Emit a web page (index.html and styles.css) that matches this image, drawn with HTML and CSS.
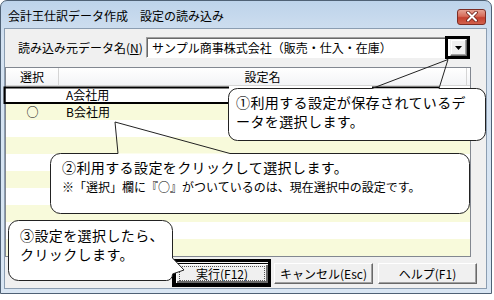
FILE: index.html
```html
<!DOCTYPE html>
<html lang="ja">

<head>
    <meta charset="UTF-8">
    <title>設定の読み込み</title>
    <link rel="stylesheet" href="styles.css">
</head>

<body>
    <div class="stage">
        <div class="window">
            <div class="titlebar">
                <span class="title">会計王仕訳データ作成　設定の読み込み</span>
                <span class="close">
                    <svg width="14" height="11" viewBox="0 0 14 11">
                        <path d="M3 1.5 L11 9.5 M11 1.5 L3 9.5" stroke="#6b1f18" stroke-width="3.6" stroke-linecap="round"/>
                        <path d="M3 1.5 L11 9.5 M11 1.5 L3 9.5" stroke="#fff" stroke-width="2" stroke-linecap="round"/>
                    </svg>
                </span>
            </div>
            <div class="client">
                <div class="source">
                    <span class="source-label">読み込み元データ名(<u>N</u>)</span>
                    <div class="combo">
                        <span class="combo-text">サンプル商事株式会社（販売・仕入・在庫）</span>
                        <span class="combo-btn">
                            <svg width="7" height="4" viewBox="0 0 7 4"><path d="M0 0 H7 L3.5 4 Z" fill="#000"/></svg>
                        </span>
                    </div>
                </div>
                <div class="list">
                    <div class="list-head">
                        <span class="col-sel">選択</span>
                        <span class="col-name">設定名</span>
                    </div>
                    <div class="row">
                        <span class="col-sel"></span>
                        <span class="col-name">A会社用</span>
                    </div>
                    <div class="row alt">
                        <span class="col-sel">○</span>
                        <span class="col-name">B会社用</span>
                    </div>
                    <div class="row"></div>
                    <div class="row alt"></div>
                    <div class="row"></div>
                    <div class="row alt"></div>
                    <div class="row"></div>
                    <div class="row alt"></div>
                    <div class="row"></div>
                    <div class="row alt"></div>
                </div>
                <div class="buttons">
                    <button class="btn btn-run"><span class="focus">実行(F12)</span></button>
                    <button class="btn btn-cancel">キャンセル(Esc)</button>
                    <button class="btn btn-help">ヘルプ(F1)</button>
                </div>
            </div>
        </div>

        <!-- annotations drawn over the dialog -->
        <svg class="marks" width="494" height="300" viewBox="0 0 494 300">
            <g fill="none" stroke="#000">
                <rect x="446.5" y="37.5" width="22" height="20" stroke-width="3"/>
                <path d="M229 87.5 H4.5 V103 H229" stroke-width="2"/>
                <path d="M372 87.5 H439" stroke-width="2"/>
                <rect x="173.5" y="260.5" width="96" height="25" stroke-width="3"/>
            </g>

            <rect x="228.5" y="88.5" width="257" height="52" rx="9" fill="#fff"/>
            <path d="M439 88.5 H476.5 A9 9 0 0 1 485.5 97.5 V131.5 A9 9 0 0 1 476.5 140.5 H237.5 A9 9 0 0 1 228.5 131.5 V97.5 A9 9 0 0 1 237.5 88.5 H372 L448 59.5 L439 88.5" fill="none" stroke="#222"/>

            <rect x="50.5" y="153.5" width="419" height="60" rx="10" fill="#fff"/>
            <path d="M230 153.5 H459.5 A10 10 0 0 1 469.5 163.5 V203.5 A10 10 0 0 1 459.5 213.5 H60.5 A10 10 0 0 1 50.5 203.5 V163.5 A10 10 0 0 1 60.5 153.5 H118 L115 122 L230 153.5" fill="none" stroke="#222"/>

            <path d="M18.5 220.5 H162.5 A10 10 0 0 1 172.5 230.5 V258 L184 270 L172.5 274 V274.5 A6 6 0 0 1 166.5 280.5 H18.5 A10 10 0 0 1 8.5 270.5 V230.5 A10 10 0 0 1 18.5 220.5 Z" fill="#fff" stroke="#222"/>
        </svg>

        <div class="note note-1">①利用する設定が保存されているデ<br>ータを選択します。</div>
        <div class="note note-2">②利用する設定をクリックして選択します。<br><small>※「選択」欄に『○』がついているのは、現在選択中の設定です。</small></div>
        <div class="note note-3">③設定を選択したら、<br>クリックします。</div>
    </div>
</body>

</html>
```

FILE: styles.css
```css
html,
body {
    margin: 0;
    padding: 0;
    background: #fff;
}

body {
    font-family: "Noto Sans CJK JP", "Liberation Sans", sans-serif;
    font-size: 12px;
    color: #000;
}

.stage {
    position: relative;
    width: 494px;
    height: 300px;
    overflow: hidden;
}

.window {
    width: 492px;
    height: 294px;
    box-sizing: border-box;
    border: 1px solid #4f6175;
    border-radius: 7px 7px 0 0;
    padding: 0 4px 4px 3px;
    background: linear-gradient(#bdd3ea, #d4e2f1 40px, #d9e6f3);
    display: flex;
    flex-direction: column;
}

.titlebar {
    height: 27px;
    display: flex;
    align-items: center;
    justify-content: space-between;
    padding: 0 0 0 4px;
}

.title {
    line-height: 14px;
    margin-top: 3px;
}

.close {
    width: 29px;
    height: 16px;
    margin: 4px 1px 0 0;
    box-sizing: border-box;
    border: 1px solid #7c2d24;
    border-radius: 3px;
    background: linear-gradient(#e6a293, #d66b59 45%, #c4402f 55%, #d2614c);
    display: flex;
    align-items: center;
    justify-content: center;
}

.client {
    flex: 1;
    box-sizing: border-box;
    border: 1px solid #8b9db1;
    background: #f0f0f0;
    display: flex;
    flex-direction: column;
}

.source {
    display: flex;
    align-items: center;
    margin-top: 8px;
    height: 21px;
}

.source-label {
    width: 128px;
    flex: none;
    margin-left: 13px;
    line-height: 14px;
}

.combo {
    width: 324px;
    height: 21px;
    box-sizing: border-box;
    border: 1px solid;
    border-color: #a0a0a0 #fff #fff #a0a0a0;
    box-shadow: inset 1px 1px #696969;
    background: #fff;
    display: flex;
    align-items: center;
    justify-content: space-between;
    padding: 1px 2px 1px 5px;
}

.combo-text {
    line-height: 14px;
}

.combo-btn {
    width: 17px;
    height: 17px;
    box-sizing: border-box;
    border: 1px solid;
    border-color: #f0f0f0 #696969 #696969 #f0f0f0;
    box-shadow: inset -1px -1px #a0a0a0, inset 1px 1px #fff;
    background: #f0f0f0;
    display: flex;
    align-items: center;
    justify-content: center;
}

.list {
    margin-top: 9px;
    width: 466px;
    height: 190px;
    box-sizing: border-box;
    border: 1px solid #828790;
    background: #fff;
}

.list-head {
    height: 18px;
    box-sizing: border-box;
    border-bottom: 1px solid #d5d5d5;
    background: linear-gradient(#fff, #f3f4f6);
    display: flex;
    padding-right: 3px;
}

.list-head span {
    border-right: 1px solid #d5d5d5;
    line-height: 17px;
}

.list-head .col-name {
    text-align: center;
    padding-left: 0;
}

.col-sel {
    width: 53px;
    flex: none;
    text-align: center;
    box-sizing: border-box;
}

.col-name {
    flex: 1;
    padding-left: 7px;
}

.row {
    height: 17px;
    display: flex;
    line-height: 17px;
}

.row.alt {
    background: #f8fadb;
}

.buttons {
    display: flex;
    justify-content: flex-end;
    gap: 5px;
    margin-top: 6px;
    padding-right: 9px;
}

.btn {
    height: 21px;
    box-sizing: border-box;
    padding: 0;
    border: 1px solid;
    border-color: #fff #696969 #696969 #fff;
    box-shadow: inset -1px -1px #a0a0a0;
    background: #f0f0f0;
    font-family: inherit;
    font-size: 12px;
    color: #000;
    line-height: 14px;
}

.btn-run {
    width: 94px;
    border-color: #000;
    box-shadow: inset 1px 1px #fff, inset -2px -2px #696969;
    display: flex;
    align-items: center;
    justify-content: center;
}

.btn-run .focus {
    width: 84px;
    height: 13px;
    line-height: 13px;
    outline: 1px dotted #555;
    text-align: center;
}

.btn-cancel,
.btn-help {
    width: 99px;
}

.marks {
    position: absolute;
    left: 0;
    top: 0;
}

.note {
    position: absolute;
    font-size: 14px;
    line-height: 19px;
    letter-spacing: 0.4px;
    white-space: nowrap;
}

.note small {
    font-size: 12px;
    line-height: 17px;
    letter-spacing: 0;
}

.note-1 {
    left: 236px;
    top: 93px;
}

.note-2 {
    left: 62px;
    top: 158px;
}

.note-3 {
    left: 20px;
    top: 226px;
}
```
